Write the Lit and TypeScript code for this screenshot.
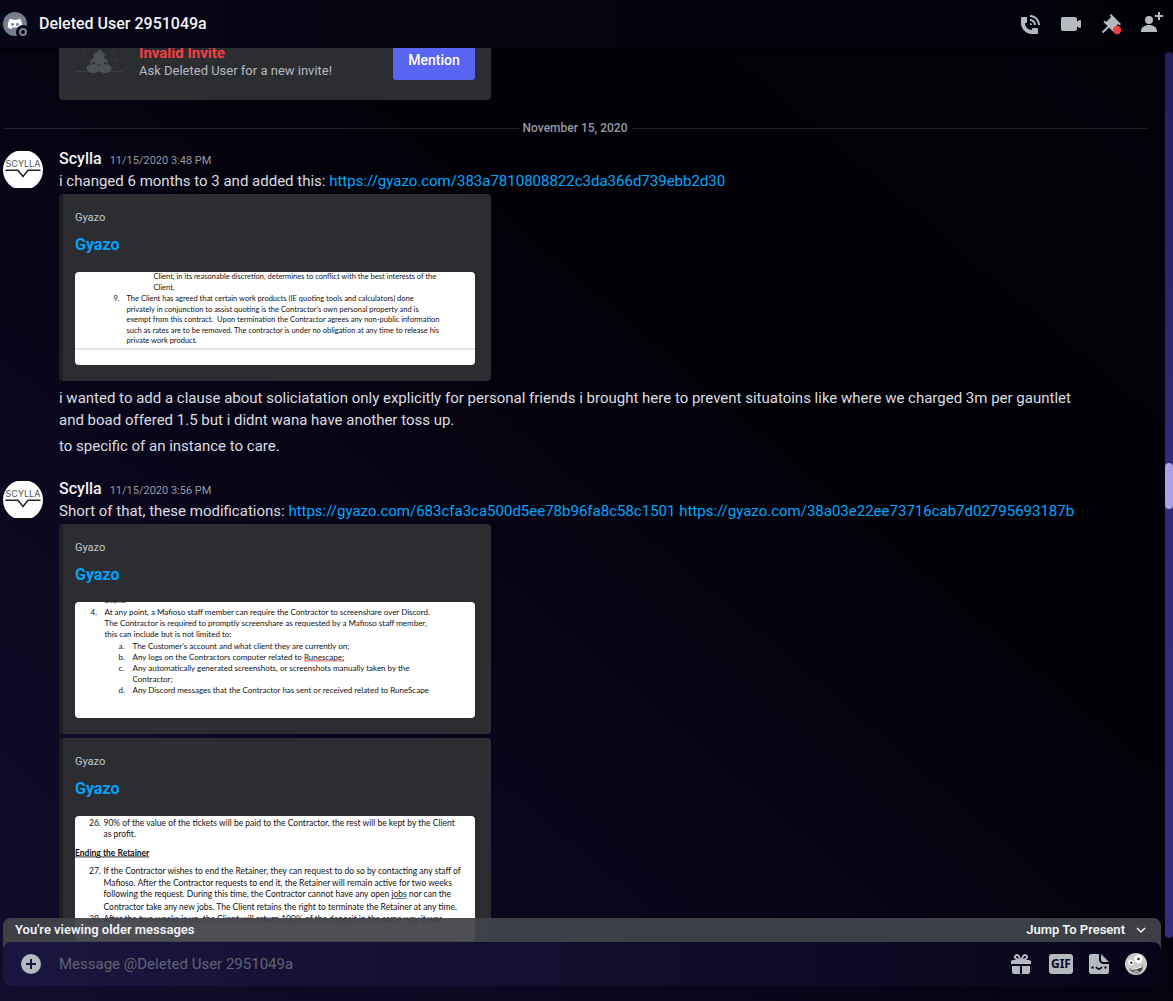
import { LitElement, html, svg, css, nothing } from "lit";
import { customElement, property } from "lit/decorators.js";

type Line = { x: number; y: number; t: string; bold?: boolean; u?: string; rest?: string; tone?: string };
type Doc = { height: number; size: number; alt: string; lines: Line[]; rule?: number };

/* Scanned document previews, drawn on an 800-unit wide sheet. */
const docs: Record<string, Doc> = {
  clause: {
    height: 186,
    size: 15,
    alt: "Contract clause 9",
    rule: 154,
    lines: [
      { x: 157, y: 14, t: "Client, in its reasonable discretion, determines to conflict with the best interests of the" },
      { x: 157, y: 35, t: "Client." },
      { x: 77, y: 57, t: "9." },
      { x: 103, y: 57, t: "The Client has agreed that certain work products (IE quoting tools and calculators) done" },
      { x: 103, y: 79, t: "privately in conjunction to assist quoting is the Contractor’s own personal property and is" },
      { x: 103, y: 100, t: "exempt from this contract.  Upon termination the Contractor agrees any non-public information" },
      { x: 103, y: 121, t: "such as rates are to be removed. The contractor is under no obligation at any time to release his" },
      { x: 103, y: 142, t: "private work product." },
    ],
  },
  share: {
    height: 232,
    size: 16,
    alt: "Contract clause 4",
    lines: [
      { x: 59, y: 2, t: "client." },
      { x: 31, y: 25, t: "4." },
      { x: 59, y: 25, t: "At any point, a Mafioso staff member can require the Contractor to screenshare over Discord." },
      { x: 59, y: 48, t: "The Contractor is required to promptly screenshare as requested by a Mafioso staff member," },
      { x: 59, y: 70, t: "this can include but is not limited to:" },
      { x: 87, y: 93, t: "a." },
      { x: 115, y: 93, t: "The Customer’s account and what client they are currently on;" },
      { x: 87, y: 115, t: "b." },
      { x: 115, y: 115, t: "Any logs on the Contractors computer related to ", u: "Runescape;", tone: "red" },
      { x: 87, y: 137, t: "c." },
      { x: 115, y: 137, t: "Any automatically generated screenshots, or screenshots manually taken by the" },
      { x: 115, y: 160, t: "Contractor;" },
      { x: 87, y: 182, t: "d." },
      { x: 115, y: 182, t: "Any Discord messages that the Contractor has sent or received related to RuneScape" },
    ],
  },
  retainer: {
    height: 250,
    size: 17,
    alt: "Ending the Retainer",
    lines: [
      { x: 28, y: 19, t: "26." },
      { x: 57, y: 19, t: "90% of the value of the tickets will be paid to the Contractor, the rest will be kept by the Client" },
      { x: 57, y: 42, t: "as profit." },
      { x: 0, y: 79, t: "", u: "Ending the Retainer", bold: true, tone: "ink" },
      { x: 28, y: 115, t: "27." },
      { x: 57, y: 115, t: "If the Contractor wishes to end the Retainer, they can request to do so by contacting any staff of" },
      { x: 57, y: 139, t: "Mafioso. After the Contractor requests to end it, the Retainer will remain active for two weeks" },
      { x: 57, y: 162, t: "following the request. During this time, the Contractor cannot have any open ", u: "jobs", rest: " nor can the", tone: "blue" },
      { x: 57, y: 187, t: "Contractor take any new jobs. The Client retains the right to terminate the Retainer at any time." },
      { x: 28, y: 211, t: "28." },
      { x: 57, y: 211, t: "After the two weeks is up, the Client will return 100% of the deposit in the same way it was" },
    ],
  },
};

@customElement("doc-preview")
class DocPreview extends LitElement {
  @property() name = "clause";
  static styles = css`
    :host { display: block; border-radius: 4px; overflow: hidden; background: #fff; }
    svg { display: block; width: 100%; height: auto; }
    text { font-family: Lato, "Liberation Sans", sans-serif; fill: #111; }
    .bold { font-weight: 700; }
    .red, .blue, .ink { text-decoration: underline; }
    .red { fill: #d33; }
    .blue { fill: #36a; }
    .word { fill: #111; }
  `;
  render() {
    const d = docs[this.name];
    return html`<svg viewBox="0 0 800 ${d.height}" role="img" aria-label=${d.alt}>
      ${d.rule ? svg`<path d="M0 ${d.rule}H800" stroke="#c6c6c6" stroke-width="2"/>` : nothing}
      ${d.lines.map((l) => svg`<text class=${l.bold ? "bold" : ""} xml:space="preserve" font-size=${d.size} x=${l.x} y=${l.y}>${l.t}${l.u ? svg`<tspan class=${l.tone}><tspan class="word">${l.u}</tspan></tspan>` : nothing}${l.rest ?? nothing}</text>`)}
    </svg>`;
  }
}

@customElement("gyazo-embed")
class GyazoEmbed extends LitElement {
  @property() doc = "clause";
  static styles = css`
    :host { display: block; box-sizing: border-box; width: 100%; max-width: 432px; padding: 16px 16px 16px 12px;
      background: #2b2d31; border-left: 4px solid #1e1f22; border-radius: 4px; }
    .provider { font-size: 11px; line-height: 16px; color: #c6c9ce; margin-bottom: 8px; }
    .title { display: block; font-size: 16px; font-weight: 700; line-height: 22px; color: #00a3f8; text-decoration: none; margin-bottom: 16px; }
  `;
  render() {
    return html`<div class="provider">Gyazo</div>
      <a class="title" href="#gyazo">Gyazo</a>
      <doc-preview .name=${this.doc}></doc-preview>`;
  }
}

@customElement("chat-message")
class ChatMessage extends LitElement {
  @property() time = "";
  static styles = css`
    :host { display: grid; grid-template-columns: 40px minmax(0, 1fr); column-gap: 16px; }
    .avatar { width: 40px; height: 40px; margin-top: 2px; border-radius: 50%; }
    .avatar text { font: 9px Inter, "Liberation Sans", sans-serif; fill: #555; }
    .body { display: flex; flex-direction: column; }
    .head { display: flex; align-items: baseline; gap: 8px; height: 22px; line-height: 22px; }
    .name { font-size: 16px; font-weight: 500; color: #f2f3f5; }
    .time { font-size: 11px; color: #949ba4; }
  `;
  render() {
    return html`
      <svg class="avatar" viewBox="0 0 40 40" role="img" aria-label="Scylla avatar">
        <path fill="#101010" d="M0 0h40v40H0z"/><path fill="#fff" d="M0 1h40v37H0z"/>
        <text x="20" y="17" text-anchor="middle">SCYLLA</text>
        <path d="M2.500 20.300h12.500l5 6.200 5-6.200h12.500" fill="none" stroke="#222" stroke-width="1.500"/>
      </svg>
      <div class="body">
        <div class="head"><span class="name">Scylla</span><time class="time">${this.time}</time></div>
        <slot></slot>
      </div>`;
  }
}

const icons = {
  call: svg`<path d="M11 5V3C16.515 3 21 7.486 21 13H19C19 8.589 15.411 5 11 5ZM17 13C17 9.691 14.309 7 11 7V9C13.206 9 15 10.794 15 13H17ZM11 11V13H13C13 11.896 12.105 11 11 11ZM14 16H18C18.553 16 19 16.447 19 17V21C19 21.553 18.553 22 18 22H13C6.925 22 2 17.075 2 11V6C2 5.447 2.448 5 3 5H7C7.553 5 8 5.447 8 6V10C8 10.553 7.553 11 7 11H6C6.063 14.938 9 18 13 18V17C13 16.447 13.447 16 14 16Z"/>`,
  video: svg`<path d="M21.526 8.149C21.231 7.966 20.862 7.951 20.553 8.105L18 9.382V7C18 5.897 17.103 5 16 5H4C2.897 5 2 5.897 2 7V17C2 18.104 2.897 19 4 19H16C17.103 19 18 18.104 18 17V14.618L20.553 15.894C20.694 15.965 20.847 16 21 16C21.183 16 21.365 15.949 21.526 15.851C21.82 15.668 22 15.347 22 15V9C22 8.653 21.82 8.332 21.526 8.149Z"/>`,
  pin: svg`<path d="M22 12L12.101 2.101L10.686 3.514L12.101 4.929L7.151 9.878L5.736 8.465L4.322 9.880L8.565 14.122L2.908 19.778L4.322 21.192L9.979 15.536L14.222 19.778L15.636 18.364L14.222 16.950L19.171 12L20.586 13.414Z"/><circle cx="18" cy="18" r="4.200" fill="#f23f42"/>`,
  add: svg`<path d="M21 3V0H19V3H16V5H19V8H21V5H24V3H21Z"/><circle cx="10" cy="8" r="4"/><path d="M10 13c-4.420 0-8 2.580-8 6v1h16v-1c0-3.420-3.580-6-8-6z"/>`,
  gift: svg`<path fill-rule="evenodd" d="M16.886 8H20a2 2 0 0 1 2 2v2H2v-2c0-1.100.9-2 2-2h3.114a5.200 5.200 0 0 1-1.235-.88 3 3 0 0 1 0-4.240c1.130-1.130 3.110-1.130 4.240 0C11.200 3.960 11.700 5.600 11.900 6.850h.2c.2-1.250.7-2.890 1.780-3.970 1.130-1.130 3.110-1.130 4.240 0a3 3 0 0 1 0 4.240c-.36.36-.79.64-1.234.88zM7.293 5.707C8.013 6.427 9.260 6.768 9.872 6.890c-.13-.64-.46-1.880-1.165-2.597A1 1 0 0 0 7.293 5.707zm9.414 0A1 1 0 0 0 15.293 4.293c-.7.7-1.040 1.930-1.165 2.590.61-.12 1.860-.46 2.579-1.176z"/><path d="M3 14h8v8H5a2 2 0 0 1-2-2zm10 0h8v6a2 2 0 0 1-2 2h-6z"/>`,
  sticker: svg`<path d="M4 2h8v5.500A4.500 4.500 0 0 0 16.500 12H22v8a2 2 0 0 1-2 2H4a2 2 0 0 1-2-2V4c0-1.100.9-2 2-2zM14 2l8 8h-5.500A2.500 2.500 0 0 1 14 7.500z"/><g fill="#0a0619"><circle cx="5.500" cy="15.500" r="1.200"/><circle cx="18.500" cy="15.500" r="1.200"/></g><path d="M9 15q3 4 6 0" fill="none" stroke="#0a0619" stroke-width="1.800"/>`,
};
const icon = (body: unknown) => html`<svg class="icon" viewBox="0 0 24 24" fill="currentColor" aria-hidden="true">${body}</svg>`;

const link = (u: string) => html`<a class="link" href=${u}>${u}</a>`;

@customElement("app-root")
class AppRoot extends LitElement {
  static styles = css`
    :host { display: flex; flex-direction: column; height: 100vh; min-height: 400px; overflow: hidden;
      font-family: Roboto, "Liberation Sans", sans-serif; color: #dbdee1;
      background: linear-gradient(to top right, #110d2b 0%, #080518 38%, #020007 62%, #030009 100%); }
    button { border: 0; padding: 0; background: none; color: inherit; font: inherit; cursor: pointer; }
    .icon { display: block; width: 24px; height: 24px; overflow: visible; }
    .header { display: flex; align-items: center; gap: 12px; height: 48px; flex: none; padding: 0 10px 0 3px; box-sizing: border-box;
      background: linear-gradient(90deg, #080516, #020007); box-shadow: 0 1px 2px #000; position: relative; }
    .userpic { width: 24px; height: 24px; flex: none; }
    .who { margin: 0; flex: 1; font-size: 16px; font-weight: 500; line-height: 22px; color: #f2f3f5; }
    .tools { display: flex; gap: 16px; color: #b5bac1; }
    .main { flex: 1; min-height: 0; display: flex; position: relative; }
    .list { flex: 1; min-width: 0; display: flex; flex-direction: column; justify-content: flex-end; overflow: hidden; padding: 0 18px 0 3px; }
    .list > * { flex: none; }
    .track { width: 8px; flex: none; margin: 4px 0; border-radius: 4px; display: flex; flex-direction: column; align-items: stretch;
      background: linear-gradient(#261f5c, #302a7b 50%, #352e80); }
    .before { flex: 411; }
    .thumb { flex: 46; border-radius: 4px; background: #aaa0e8; }
    .after { flex: 429; }
    .invite { box-sizing: border-box; width: 100%; max-width: 432px; margin-left: 56px; padding: 16px 16px 20px; border-radius: 4px;
      background: #2b2d31; display: flex; align-items: flex-end; gap: 16px; }
    .poop { width: 48px; height: 48px; flex: none; }
    .note { flex: 1; font-size: 13px; line-height: 18px; color: #b5bac1; }
    .bad { font-size: 15px; font-weight: 700; color: #f23f42; }
    .mention { width: 82px; height: 40px; border-radius: 3px; background: #5865f2; color: #fff; font-size: 14px; font-weight: 500; }
    .divider { display: flex; align-items: center; gap: 4px; margin: 22px 0 14px; font-size: 12px; font-weight: 500; line-height: 12px; color: #949ba4; }
    .divider::before, .divider::after { content: ""; flex: 1; height: 1px; background: #232129; }
    .text { margin: 0; padding-right: 60px; font-size: 15px; line-height: 22px; }
    .link { color: #00a8fc; text-decoration: none; }
    .embeds { display: flex; flex-direction: column; gap: 4px; margin-top: 2px; }
    .follow { margin-top: 6px; }
    .next { margin-top: 4px; }
    .group { margin-top: 21px; }
    .last { margin-bottom: -15px; }
    .older { position: absolute; left: 3px; right: 12px; bottom: -8px; height: 32px; box-sizing: border-box; padding: 0 12px 8px;
      display: flex; align-items: center; justify-content: space-between; border-radius: 8px 8px 0 0;
      background: rgba(65, 67, 73, 0.94); font-size: 13px; font-weight: 600; line-height: 24px; color: #f2f3f5; }
    .jump { display: flex; align-items: center; gap: 8px; }
    .chev { width: 16px; height: 16px; }
    .composer { position: relative; flex: none; height: 44px; margin: 0 12px 15px 3px; padding: 0 14px 0 16px; display: flex; align-items: center;
      border-radius: 8px; color: #b5bac1; background: linear-gradient(90deg, #1a1640, #120e2c 50%, #080519); }
    .input { flex: 1; min-width: 0; margin: 0 16px; padding: 0; border: 0; outline: 0; background: none; color: #dbdee1; font: 15px/22px Roboto, sans-serif; }
    .input::placeholder { color: #64626e; opacity: 1; }
    .actions { display: flex; align-items: center; gap: 14px; }
    .gif { width: 24px; height: 20px; margin-left: 2px; border-radius: 3px; background: #b5bac1; color: #0a0619; font: 700 12px/20px "Noto Sans", sans-serif; }
    .emoji { width: 22px; height: 22px; display: block; }
  `;

  render() {
    return html`
      <header class="header">
        <svg class="userpic" viewBox="0 0 24 24" role="img" aria-label="Offline">
          <circle cx="12" cy="12" r="12" fill="#747f8d"/>
          <path fill="#fff" d="M8.500 6.800Q7 7 6.200 7.700 4.600 11 4.700 15.200 6.200 16.700 8.500 17l.8-1.500h5.400l.8 1.500q2.300-.3 3.800-1.800.1-4.200-1.500-7.500-.8-.7-2.300-.9l-.6 1h-5.200z"/>
          <circle cx="9.500" cy="12.500" r="1.400" fill="#747f8d"/><circle cx="14.500" cy="12.500" r="1.400" fill="#747f8d"/>
          <circle cx="20" cy="20" r="7" fill="#060412"/><circle cx="20" cy="20" r="3" fill="none" stroke="#80848e" stroke-width="2"/>
        </svg>
        <h1 class="who">Deleted User 2951049a</h1>
        <div class="tools">
          <button aria-label="Start voice call">${icon(icons.call)}</button>
          <button aria-label="Start video call">${icon(icons.video)}</button>
          <button aria-label="Pinned messages">${icon(icons.pin)}</button>
          <button aria-label="Add friends">${icon(icons.add)}</button>
        </div>
      </header>
      <main class="main">
        <div class="list">
          <section class="invite">
            <svg class="poop" viewBox="0 0 48 48" aria-hidden="true">
              <path d="M0 39.500h48" stroke="#3a3d43"/>
              <g fill="#4e5058"><path d="M23 17q5 1 5 5h-8q4-2 3-5z"/><ellipse cx="24" cy="23.500" rx="6" ry="3.500"/><ellipse cx="24" cy="30.500" rx="9" ry="5.500"/><ellipse cx="18" cy="36.500" rx="6.500" ry="4.500"/><ellipse cx="30" cy="36.500" rx="6.500" ry="4.500"/></g>
              <g fill="#2b2d31"><circle cx="18.500" cy="31" r="1.500"/><circle cx="30" cy="31" r="1.500"/></g>
              <path d="M22.500 33.500q1.800-1.500 3.500 0" stroke="#2b2d31" fill="none"/>
              <g fill="#3f4248"><circle cx="10" cy="21" r="1"/><circle cx="39" cy="21" r="1"/><circle cx="5" cy="26" r="1"/><circle cx="42" cy="28" r="1"/></g>
            </svg>
            <div class="note"><div class="bad">Invalid Invite</div>Ask Deleted User for a new invite!</div>
            <button class="mention">Mention</button>
          </section>
          <div class="divider" role="separator">November 15, 2020</div>
          <chat-message time="11/15/2020 3:48 PM">
            <p class="text">i changed 6 months to 3 and added this: ${link("https://gyazo.com/383a7810808822c3da366d739ebb2d30")}</p>
            <div class="embeds"><gyazo-embed doc="clause"></gyazo-embed></div>
            <p class="text follow">i wanted to add a clause about soliciatation only explicitly for personal friends i brought here to prevent situatoins like where we charged 3m per gauntlet and boad offered 1.5 but i didnt wana have another toss up.</p>
            <p class="text next">to specific of an instance to care.</p>
          </chat-message>
          <chat-message class="group last" time="11/15/2020 3:56 PM">
            <p class="text">Short of that, these modifications: ${link("https://gyazo.com/683cfa3ca500d5ee78b96fa8c58c1501")} ${link("https://gyazo.com/38a03e22ee73716cab7d02795693187b")}</p>
            <div class="embeds"><gyazo-embed doc="share"></gyazo-embed><gyazo-embed doc="retainer"></gyazo-embed></div>
          </chat-message>
        </div>
        <div class="track" aria-hidden="true"><div class="before"></div><div class="thumb"></div><div class="after"></div></div>
        <div class="older">
          <span>You're viewing older messages</span>
          <button class="jump">Jump To Present
            <svg class="chev" viewBox="0 0 16 16" aria-hidden="true"><path d="M4 6l4 4 4-4" fill="none" stroke="currentColor" stroke-width="1.500"/></svg>
          </button>
        </div>
      </main>
      <form class="composer">
        <button type="button" aria-label="Add attachment">${icon(svg`<path fill-rule="evenodd" d="M12 2a10 10 0 1 0 0 20 10 10 0 0 0 0-20zm1 5v4h4v2h-4v4h-2v-4H7v-2h4V7z"/>`)}</button>
        <input class="input" type="text" aria-label="Message" placeholder="Message @Deleted User 2951049a">
        <div class="actions">
          <button type="button" aria-label="Send a gift">${icon(icons.gift)}</button>
          <button type="button" class="gif">GIF</button>
          <button type="button" aria-label="Open sticker picker">${icon(icons.sticker)}</button>
          <button type="button" aria-label="Select emoji">
            <svg class="emoji" viewBox="0 0 22 22" aria-hidden="true">
              <circle cx="11" cy="11" r="11" fill="#cbcbcb"/>
              <circle cx="13.500" cy="6" r="4.200" fill="#fff"/><circle cx="6" cy="9.500" r="2.800" fill="#fff"/>
              <circle cx="13.500" cy="6" r="1.300" fill="#333"/><circle cx="6.300" cy="9.800" r="1.200" fill="#333"/>
              <path d="M4.500 15.500q7 .5 13.500-3.500 0 7-6 8-5 .5-7.500-4.500z" fill="#444"/>
              <path d="M5.500 15.600q6 .2 12-3v1.500q-6 3-11.200 3z" fill="#fff"/>
              <path d="M8 18q3-2 6 0v2.500q-1.500 1.500-3 .8-2-.5-3-3.300z" fill="#999"/>
            </svg>
          </button>
        </div>
      </form>`;
  }
}
